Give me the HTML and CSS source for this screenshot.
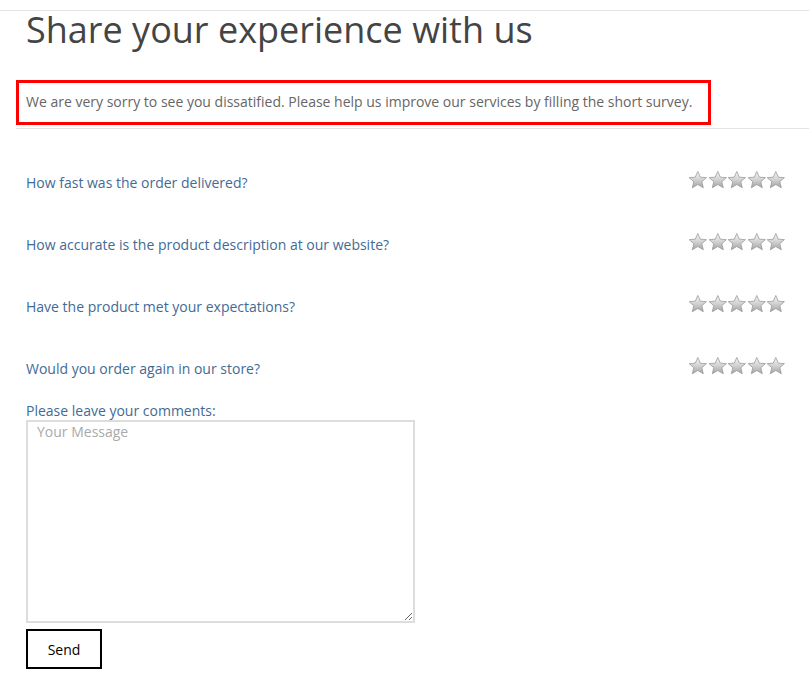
FILE: index.html
```
<!DOCTYPE html>
<html>
<head>
<meta charset="utf-8">
<link rel="stylesheet" href="styles.css">
</head>
<body>
<svg width="0" height="0" class="defs">
  <defs>
    <linearGradient id="sg" x1="0" y1="0" x2="0" y2="1">
      <stop offset="0" stop-color="#f7f7f7"/>
      <stop offset="0.5" stop-color="#d2d2d2"/>
      <stop offset="1" stop-color="#a4a4a4"/>
    </linearGradient>
    <symbol id="star" viewBox="0 0 20 20">
      <path d="M10 1.3 L12.6 7.1 L18.8 7.6 L14.1 11.7 L15.6 17.9 L10 14.6 L4.4 17.9 L5.9 11.7 L1.2 7.6 L7.4 7.1 Z" fill="url(#sg)" stroke="#999" stroke-width="0.8" stroke-linejoin="round"/>
    </symbol>
  </defs>
</svg>
<div class="page">
  <h1 class="title">Share your experience with us</h1>
  <div class="notice">We are very sorry to see you dissatified. Please help us improve our services by filling the short survey.</div>
  <div class="questions">
    <div class="q"><span class="qtext">How fast was the order delivered?</span><span class="stars"><svg class="s"><use href="#star"/></svg><svg class="s"><use href="#star"/></svg><svg class="s"><use href="#star"/></svg><svg class="s"><use href="#star"/></svg><svg class="s"><use href="#star"/></svg></span></div>
    <div class="q"><span class="qtext">How accurate is the product description at our website?</span><span class="stars"><svg class="s"><use href="#star"/></svg><svg class="s"><use href="#star"/></svg><svg class="s"><use href="#star"/></svg><svg class="s"><use href="#star"/></svg><svg class="s"><use href="#star"/></svg></span></div>
    <div class="q"><span class="qtext">Have the product met your expectations?</span><span class="stars"><svg class="s"><use href="#star"/></svg><svg class="s"><use href="#star"/></svg><svg class="s"><use href="#star"/></svg><svg class="s"><use href="#star"/></svg><svg class="s"><use href="#star"/></svg></span></div>
    <div class="q"><span class="qtext">Would you order again in our store?</span><span class="stars"><svg class="s"><use href="#star"/></svg><svg class="s"><use href="#star"/></svg><svg class="s"><use href="#star"/></svg><svg class="s"><use href="#star"/></svg><svg class="s"><use href="#star"/></svg></span></div>
  </div>
  <div class="comments">
    <label class="clabel">Please leave your comments:</label>
    <textarea class="msg" placeholder="Your Message"></textarea>
    <button class="send">Send</button>
  </div>
</div>
</body>
</html>
```
FILE: styles.css
```
html, body { margin: 0; padding: 0; background: #fff; }
body { font-family: "Open Sans", "Liberation Sans", sans-serif; }
.defs { position: absolute; width: 0; height: 0; }
.page {
  border-top: 1px solid #e3e3e3;
  margin-top: 10px;
}
.title {
  margin: 0;
  padding-left: 26px;
  font-size: 36px;
  font-weight: 400;
  line-height: 38px;
  color: #444;
  height: 69px;
}
.notice {
  margin-left: 16px;
  height: 39px;
  border: 3px solid #f00;
  box-sizing: content-box;
  padding: 0 0 0 7px;
  font-size: 14px;
  line-height: 37px;
  color: #666;
  width: 682px;
}
.questions {
  margin-left: 16px;
  border-top: 1px solid #e3e3e3;
  margin-top: 3px;
  padding-top: 22px;
}
.q {
  display: flex;
  justify-content: space-between;
  align-items: center;
  height: 62px;
  padding-left: 10px;
  padding-right: 23px;
}
.qtext { font-size: 14px; color: #3f6b96; }
.stars { display: flex; margin-bottom: 4px; }
.s { width: 19.6px; height: 20px; display: block; }
.comments { padding-left: 26px; display: flex; flex-direction: column; align-items: flex-start; margin-top: 2px; }
.clabel { font-size: 14px; color: #3f6b96; line-height: 19px; }
.msg {
  width: 389px;
  height: 203px;
  box-sizing: border-box;
  border: 2px solid #ddd;
  margin: 0;
  padding: 0 9px;
  font-family: "Open Sans", "Liberation Sans", sans-serif;
  font-size: 14px;
  resize: vertical;
}
.msg::placeholder { color: #aaa; }
.send {
  margin-top: 6px;
  width: 76px;
  height: 40px;
  border: 2px solid #000;
  background: #fff;
  font-family: "Open Sans", "Liberation Sans", sans-serif;
  font-size: 14px;
  color: #000;
  padding: 0;
}
```
